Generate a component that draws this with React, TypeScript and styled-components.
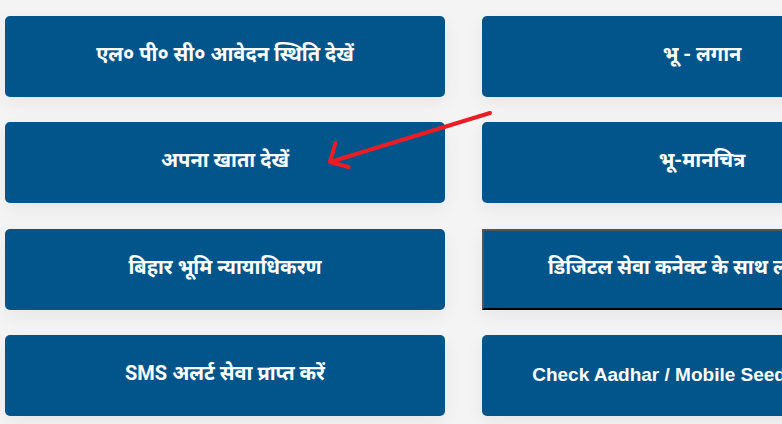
import React from "react";
import styled, { createGlobalStyle } from "styled-components";

const Global = createGlobalStyle`
  html, body { margin: 0; padding: 0; background: #f4f4f4; overflow: hidden; }
  body { width: 782px; height: 424px; }
`;

const Page = styled.div`
  position: relative;
  width: 782px;
  height: 424px;
  overflow: hidden;
  background: #f4f4f4;
`;

const Grid = styled.div`
  display: grid;
  grid-template-columns: 440px 440px;
  grid-auto-rows: 81px;
  column-gap: 37px;
  row-gap: 25.3px;
  padding: 16px 0 0 5px;
`;

const Card = styled.button<{ $latin?: boolean; $outlined?: boolean }>`
  display: flex;
  align-items: center;
  justify-content: center;
  padding: ${(p) => (p.$latin ? "0 0 1px 6px" : "0 0 6px")};
  margin: 0;
  background: #02558a;
  color: #ffffff;
  border: ${(p) => (p.$outlined ? "2px solid" : "none")};
  border-color: #555555 #000000 #000000 #555555;
  border-radius: ${(p) => (p.$outlined ? "0" : "5px")};
  box-shadow: 0 6px 18px rgba(0, 0, 0, 0.06);
  font-family: ${(p) =>
    p.$latin
      ? '"Liberation Sans", Arial, sans-serif'
      : 'Roboto, "Noto Sans", "Noto Sans Devanagari", sans-serif'};
  font-weight: 700;
  font-size: ${(p) => (p.$latin ? "19px" : "20px")};
  white-space: nowrap;
  overflow: hidden;
  cursor: pointer;
`;

const Arrow = styled.svg`
  position: absolute;
  left: 0;
  top: 0;
  pointer-events: none;
`;

const items: { label: string; latin?: boolean; outlined?: boolean }[] = [
  { label: "एल० पी० सी० आवेदन स्थिति देखें" },
  { label: "भू - लगान" },
  { label: "अपना खाता देखें" },
  { label: "भू-मानचित्र" },
  { label: "बिहार भूमि न्यायाधिकरण" },
  { label: "डिजिटल सेवा कनेक्ट के साथ लाभ उठाएं", outlined: true },
  { label: "SMS अलर्ट सेवा प्राप्त करें" },
  { label: "Check Aadhar / Mobile Seeding Status", latin: true },
];

export default function App() {
  return (
    <Page>
      <Global />
      <Grid>
        {items.map((it) => (
          <Card key={it.label} $latin={it.latin} $outlined={it.outlined}>
            {it.label}
          </Card>
        ))}
      </Grid>
      <Arrow width="782" height="424" viewBox="0 0 782 424">
        <g stroke="#ea1c24" strokeWidth="4" strokeLinecap="round" fill="none">
          <line x1="490" y1="113" x2="330" y2="162" />
          <line x1="330" y1="162" x2="335.5" y2="143" />
          <line x1="330" y1="162" x2="348.5" y2="167" />
        </g>
      </Arrow>
    </Page>
  );
}
